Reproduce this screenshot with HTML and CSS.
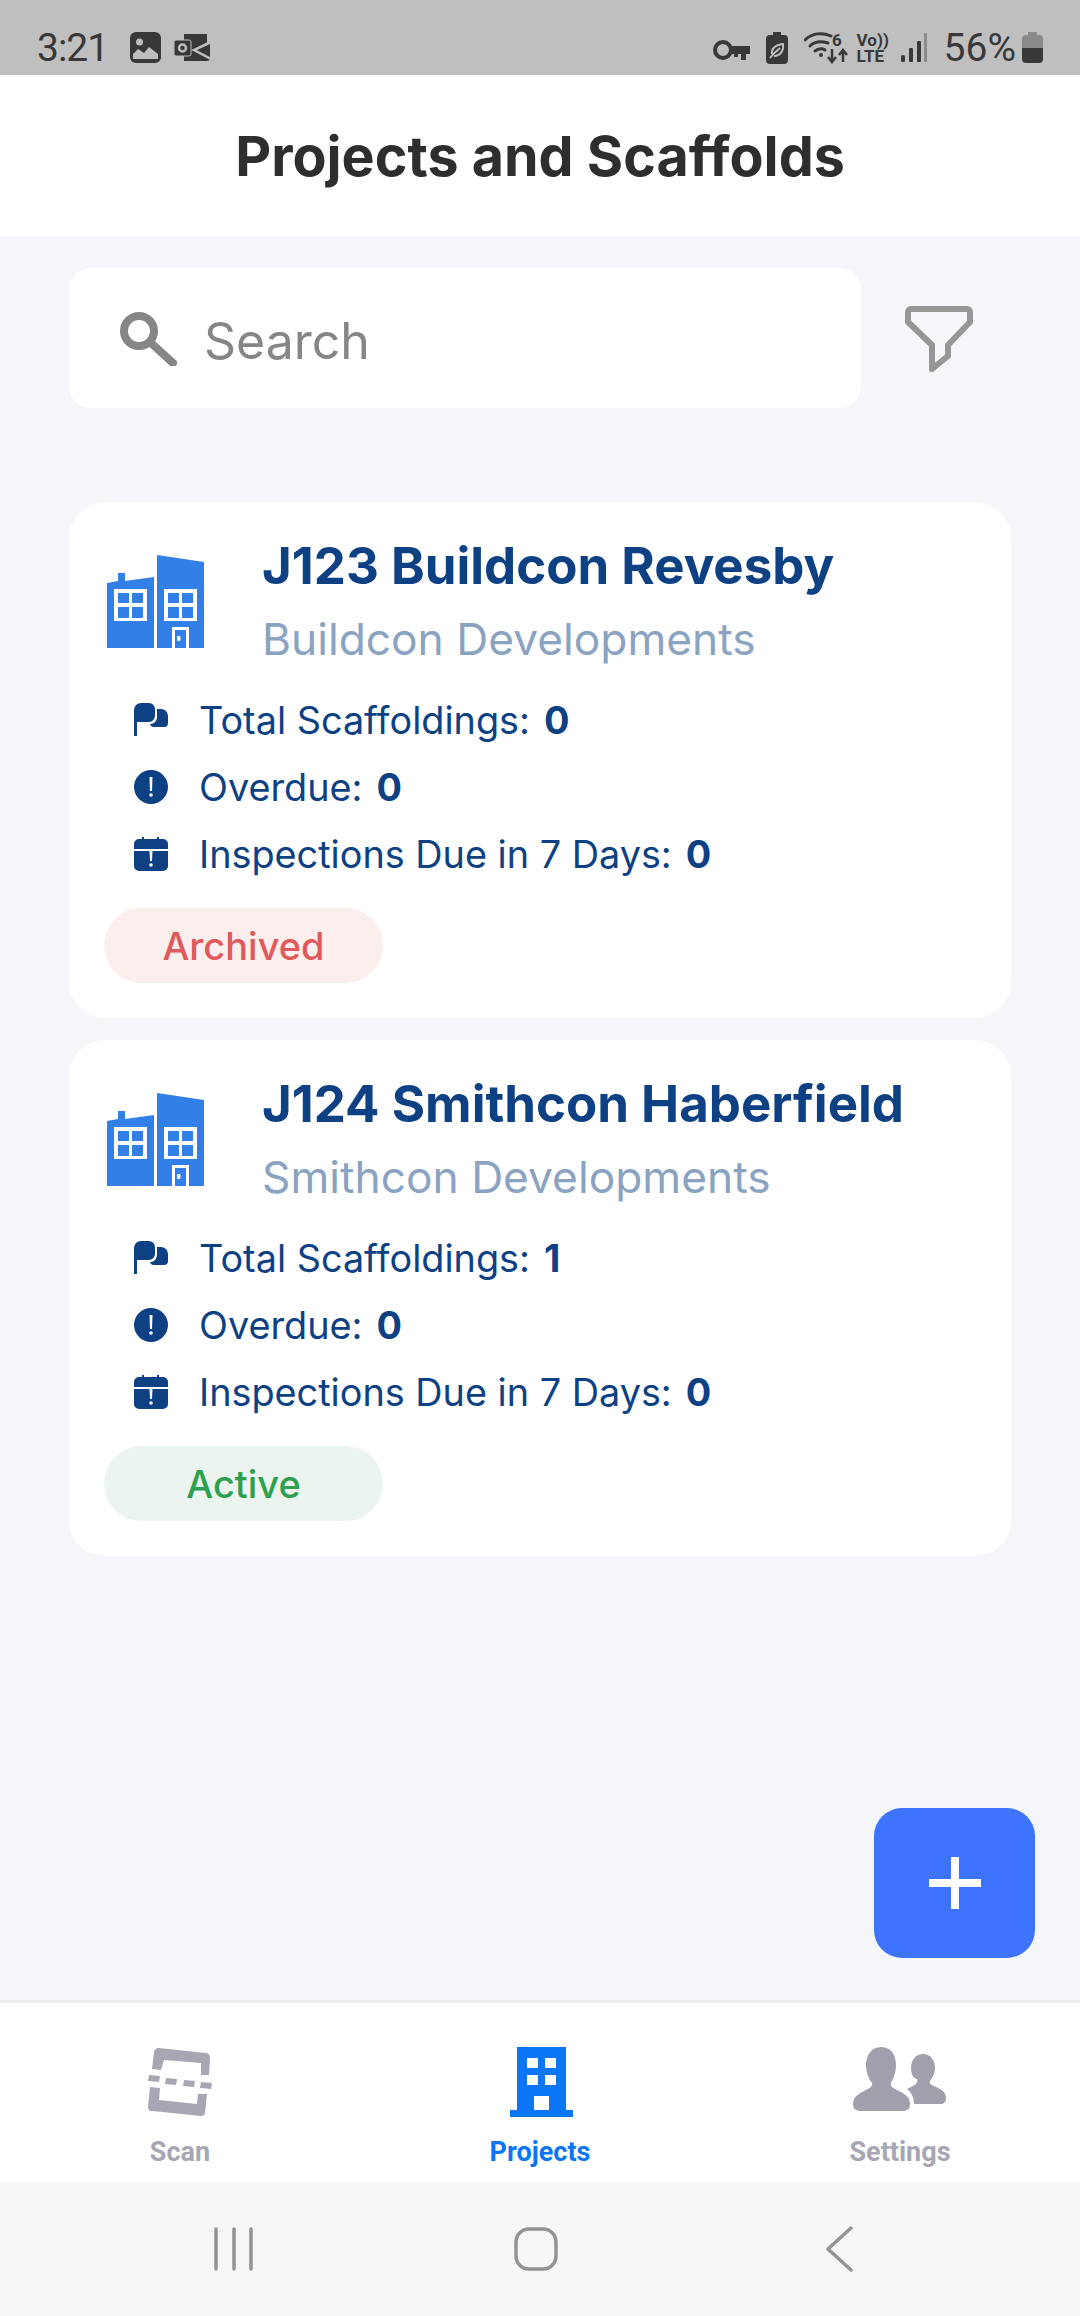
FILE: index.html
```html
<!DOCTYPE html>
<html lang="en">

<head>
    <meta charset="UTF-8">
    <meta name="viewport" content="width=device-width, initial-scale=1.0">
    <title>Projects and Scaffolds</title>
    <link rel="stylesheet" href="styles.css">
</head>

<body>
    <svg class="defs" width="0" height="0">
        <symbol id="building" viewBox="0 0 97 93">
            <path fill="#337fe8" fill-rule="evenodd" d="M0 28l11-2v-8h7v8l29-4v71H0zM7 34v32h33V34zM50 0l47 7v86H82V72H65v21H50zM57 34v32h33V34z" />
            <path fill="#337fe8" d="M11 38h11v10H11zM25 38h11v10H25zM11 52h11v11H11zM25 52h11v11H25zM61 38h11v10H61zM75 38h11v10H75zM61 52h11v11H61zM75 52h11v11H75zM68 75h11v18H68z" />
            <rect fill="#fff" x="70" y="81" width="3.500" height="5" rx="1" />
        </symbol>
        <symbol id="flag" viewBox="0 0 34 34">
            <path fill="#0d4184" d="M0 7a7 7 0 0 1 7-7h8a6 6 0 0 1 6 6v7a6 6 0 0 1-6 6H3v14H0z" />
            <path fill="#0d4184" d="M23 6h4a7 7 0 0 1 7 7v7a4 4 0 0 1-4 4H20a4 4 0 0 1-4-3h1a7 7 0 0 0 6-7z" />
        </symbol>
        <symbol id="alert" viewBox="0 0 34 34">
            <circle fill="#0d4184" cx="17" cy="17" r="17" />
            <path fill="#fff" d="M15.500 7h3l-.5 14h-2z" />
            <circle fill="#fff" cx="17" cy="25" r="1.800" />
        </symbol>
        <symbol id="due" viewBox="0 0 34 34">
            <path fill="#0d4184" d="M5 2h3V0h2v2h13V0h2v2h4a5 5 0 0 1 5 5v5H0V7a5 5 0 0 1 5-5zM0 14h15.500l.5 10h2l.5-10H34v15a5 5 0 0 1-5 5H5a5 5 0 0 1-5-5z" />
            <circle fill="#fff" cx="17" cy="28" r="1.800" />
        </symbol>
    </svg>

    <div class="status-bar">
        <div class="status-left">
            <span class="time">3:21</span>
            <svg width="31" height="31" viewBox="0 0 31 31">
                <rect fill="#383838" width="31" height="31" rx="6" />
                <circle fill="#bfbfbf" cx="9.500" cy="10" r="3.500" />
                <path fill="#bfbfbf" d="M3 27v-5l5-5 6 4 5-6 9 7v5z" />
            </svg>
            <svg width="37" height="28" viewBox="0 0 37 28">
                <path fill="#383838" d="M10 0h23v9l3 1v16l-3 1H10z" />
                <path fill="none" stroke="#bfbfbf" stroke-width="2.500" d="M37 8L20 16l17 9" />
                <rect fill="#383838" stroke="#bfbfbf" stroke-width="1" y="6" width="17" height="16" rx="2" />
                <circle fill="none" stroke="#bfbfbf" stroke-width="2.500" cx="8.500" cy="14" r="3.500" />
            </svg>
        </div>
        <div class="status-right">
            <svg class="key" width="37" height="20" viewBox="0 0 37 20">
                <circle fill="none" stroke="#383838" stroke-width="4" cx="10" cy="10" r="8" />
                <path fill="#383838" d="M17 6h20v8h-4v6h-5v-6h-3v3h-4v-3h-4z" />
            </svg>
            <svg class="gap-l" width="22" height="32" viewBox="0 0 22 32">
                <path fill="#383838" d="M7 0h8v3h3a4 4 0 0 1 4 4v21a4 4 0 0 1-4 4H4a4 4 0 0 1-4-4V7a4 4 0 0 1 4-4h3z" />
                <path fill="none" stroke="#bfbfbf" stroke-width="2" d="M4 26c3-4 5-6 10-10M6 22c-1-5 3-9 11-10 1 7-3 12-9 12" />
            </svg>
            <svg class="gap-l" width="45" height="33" viewBox="0 0 45 33">
                <g fill="none" stroke="#383838" stroke-width="3" stroke-linecap="round">
                    <path d="M1 9C8 2 18 1 27 5" />
                    <path d="M6 15c5-5 11-5 18-3" />
                    <path d="M11 20c3-2 7-3 10-1" />
                </g>
                <circle fill="#383838" cx="17" cy="24" r="2" />
                <text x="28" y="15" class="wifi-six">6</text>
                <path fill="none" stroke="#383838" stroke-width="2.500" d="M28 18v12M24 26l4 5 4-5M39 31V20M35 24l4-5 4 5" />
            </svg>
            <div class="volte"><span>Vo))</span><span>LTE</span></div>
            <svg class="gap-m" width="26" height="29" viewBox="0 0 26 29">
                <rect fill="#383838" y="22" width="4" height="7" rx="1.500" />
                <rect fill="#383838" x="8" y="15" width="4" height="14" rx="1" />
                <rect fill="#383838" x="16" y="8" width="4" height="21" rx="1" />
                <rect fill="#8a8a8a" x="23" width="3" height="29" rx="1" />
            </svg>
            <span class="battery-text">56%</span>
            <svg width="21" height="31" viewBox="0 0 21 31">
                <path fill="#8a8a8a" d="M6 0h9v3h2a4 4 0 0 1 4 4v9H0V7a4 4 0 0 1 4-4h2z" />
                <path fill="#383838" d="M0 16h21v11a4 4 0 0 1-4 4H4a4 4 0 0 1-4-4z" />
            </svg>
        </div>
    </div>

    <header class="page-header">
        <h1>Projects and Scaffolds</h1>
    </header>

    <main class="content">
        <div class="search-row">
            <div class="search-box">
                <svg width="58" height="56" viewBox="0 0 58 56">
                    <circle fill="none" stroke="#868686" stroke-width="8" cx="20" cy="21" r="15" />
                    <path fill="none" stroke="#868686" stroke-width="8" stroke-linecap="round" d="M32 33l22 20" />
                </svg>
                <span class="search-text">Search</span>
            </div>
            <svg class="filter-icon" width="68" height="66" viewBox="0 0 68 66">
                <path fill="none" stroke="#969696" stroke-width="6" stroke-linejoin="round" d="M6 3h56a3 3 0 0 1 3 3v10L43 39v11L27 63V39L3 16V6a3 3 0 0 1 3-3z" />
            </svg>
        </div>

        <section class="card">
            <div class="card-top">
                <svg class="building" width="97" height="93"><use href="#building" /></svg>
                <div>
                    <div class="card-title">J123 Buildcon Revesby</div>
                    <div class="card-sub">Buildcon Developments</div>
                </div>
            </div>
            <ul class="stats">
                <li><svg width="34" height="34"><use href="#flag" /></svg><span>Total Scaffoldings:</span><b>0</b></li>
                <li><svg width="34" height="34"><use href="#alert" /></svg><span>Overdue:</span><b>0</b></li>
                <li><svg width="34" height="34"><use href="#due" /></svg><span>Inspections Due in 7 Days:</span><b>0</b></li>
            </ul>
            <div class="badge archived">Archived</div>
        </section>

        <section class="card">
            <div class="card-top">
                <svg class="building" width="97" height="93"><use href="#building" /></svg>
                <div>
                    <div class="card-title">J124 Smithcon Haberfield</div>
                    <div class="card-sub">Smithcon Developments</div>
                </div>
            </div>
            <ul class="stats">
                <li><svg width="34" height="34"><use href="#flag" /></svg><span>Total Scaffoldings:</span><b>1</b></li>
                <li><svg width="34" height="34"><use href="#alert" /></svg><span>Overdue:</span><b>0</b></li>
                <li><svg width="34" height="34"><use href="#due" /></svg><span>Inspections Due in 7 Days:</span><b>0</b></li>
            </ul>
            <div class="badge active">Active</div>
        </section>

        <button class="fab" type="button">
            <svg width="52" height="52" viewBox="0 0 52 52">
                <path fill="#fff" d="M22 0h8v22h22v8H30v22h-8V30H0v-8h22z" />
            </svg>
        </button>
    </main>

    <nav class="tab-bar">
        <div class="tab">
            <svg width="64" height="70" viewBox="0 0 64 70">
                <path fill="#a6a7b2" d="M11 1l47 5a5 5 0 0 1 4 5l-1 17h-8V16L16 13l-3 10-9-1 2-17a5 5 0 0 1 5-4zM2 40l10 1-1 12 38 4 1-10 9 0-2 19a4 4 0 0 1-4 3L5 64a4 4 0 0 1-5-4z" />
                <path fill="#a6a7b2" d="M1 28l11 1-1 6-11-1zM18 31l11 1-1 6-11-1zM36 33l11 1-1 6-11-1zM53 35l11 1-1 6-11-1z" />
            </svg>
            <span>Scan</span>
        </div>
        <div class="tab current">
            <svg width="64" height="70" viewBox="0 0 64 70">
                <path fill="#0a76f6" fill-rule="evenodd" d="M7 0h49v63h7v7H0v-7h7zM17 11v10h11V11zM35 11v10h11V11zM17 28v10h11V28zM35 28v10h11V28zM24 49v14h15V49z" />
            </svg>
            <span>Projects</span>
        </div>
        <div class="tab">
            <svg width="94" height="70" viewBox="0 0 94 70">
                <path fill="#a0a1ad" d="M28 0C39 0 43 9 43 18 43 26 40 32 38 36 37 39 40 41 44 43 50 46 57 49 57 57 57 62 54 64 50 64H8C3 64 0 62 0 57 0 49 7 46 13 43 17 41 20 39 19 36 16 32 13 26 13 18 13 9 18 0 28 0Z" />
                <path fill="#a0a1ad" d="M70 7C78 7 82 14 82 21 82 27 79 31 77 34 76 36 78 38 81 39 87 42 93 44 93 51 93 55 91 57 87 57H61C61 50 58 45 54 42 57 40 61 39 63 37 64 35 65 33 64 32 60 31 58 27 58 21 58 14 62 7 70 7Z" />
            </svg>
            <span>Settings</span>
        </div>
    </nav>

    <div class="system-nav">
        <svg width="40" height="44" viewBox="0 0 40 44">
            <path fill="none" stroke="#949494" stroke-width="3.500" stroke-linecap="round" d="M2 2v40M20 2v40M37 2v40" />
        </svg>
        <svg class="nav-home" width="44" height="44" viewBox="0 0 44 44">
            <rect fill="none" stroke="#949494" stroke-width="3.500" x="2" y="2" width="40" height="40" rx="13" />
        </svg>
        <svg class="nav-back" width="28" height="46" viewBox="0 0 28 46">
            <path fill="none" stroke="#949494" stroke-width="3.500" stroke-linecap="round" stroke-linejoin="round" d="M25 2L2 23l23 21" />
        </svg>
    </div>
</body>

</html>
```

FILE: styles.css
```css
* {
    box-sizing: border-box;
}

html,
body {
    margin: 0;
    padding: 0;
}

body {
    width: 1080px;
    height: 2316px;
    display: flex;
    flex-direction: column;
    overflow: hidden;
    background-color: #f5f6fa;
    font-family: Inter, "Noto Sans", sans-serif;
}

.defs {
    position: absolute;
}

svg {
    display: block;
    flex-shrink: 0;
}

/* status bar */
.status-bar {
    height: 75px;
    padding: 20px 37px 0 37px;
    display: flex;
    justify-content: space-between;
    align-items: center;
    background-color: #bfbfbf;
    color: #383838;
    font-family: Roboto, sans-serif;
    font-size: 39px;
}

.status-left,
.status-right {
    display: flex;
    align-items: center;
}

.status-left .time {
    margin-right: 22px;
    font-size: 39px;
    letter-spacing: -1px;
}

.status-left svg {
    margin-right: 13px;
}

.status-right .key {
    margin-top: 5px;
}

.status-right .gap-l {
    margin-left: 16px;
}

.status-right .gap-m {
    margin-left: 14px;
}

.wifi-six {
    font-family: Roboto, sans-serif;
    font-size: 17px;
    font-weight: 700;
    fill: #383838;
}

.volte {
    margin-left: 8px;
    display: flex;
    flex-direction: column;
    font-size: 17px;
    font-weight: 700;
    line-height: 16px;
    width: 30px;
    white-space: nowrap;
}

.battery-text {
    margin: 0 6px 0 17px;
}

/* title */
.page-header {
    height: 161px;
    display: flex;
    align-items: center;
    justify-content: center;
    background-color: #fff;
}

.page-header h1 {
    margin: 0;
    font-size: 55.600px;
    font-weight: 700;
    color: #2e2e2e;
}

/* list */
.content {
    flex: 1;
    position: relative;
    padding: 32px 69px 0;
    border-bottom: 3px solid #eeeeef;
}

.search-row {
    display: flex;
    align-items: center;
    margin-bottom: 94px;
}

.search-box {
    width: 792px;
    height: 140px;
    padding: 0 50px;
    display: flex;
    align-items: center;
    gap: 27px;
    background-color: #fff;
    border-radius: 22px;
}

.search-text {
    margin-top: 5px;
    font-size: 50px;
    color: #868686;
}

.filter-icon {
    margin: 2px 0 0 44px;
}

.card {
    height: 516px;
    margin-bottom: 22px;
    padding: 35px 35px 0;
    background-color: #fff;
    border-radius: 36px;
}

.card-top {
    display: flex;
    align-items: flex-start;
}

.building {
    margin: 18px 58px 0 3px;
}

.card-title {
    font-size: 51px;
    line-height: 58px;
    font-weight: 700;
    color: #0d4184;
}

.card-sub {
    margin-top: 18px;
    font-size: 44.300px;
    line-height: 52px;
    color: #8aa3c1;
}

.stats {
    list-style: none;
    margin: 21px 0 0;
    padding: 0 0 0 30px;
}

.stats li {
    height: 67px;
    display: flex;
    align-items: center;
    font-size: 37.800px;
    color: #0d4184;
}

.stats li svg {
    margin-right: 31px;
}

.stats b {
    margin-left: 14px;
    font-weight: 700;
}

.badge {
    width: 279px;
    height: 75px;
    margin-top: 21px;
    display: flex;
    align-items: center;
    justify-content: center;
    border-radius: 38px;
    font-size: 38px;
    font-weight: 500;
}

.archived {
    background-color: #fbefee;
    color: #de5a5c;
}

.active {
    background-color: #ebf4ee;
    color: #2ca04f;
}

.fab {
    position: absolute;
    right: 45px;
    bottom: 42px;
    width: 161px;
    height: 150px;
    padding: 0;
    display: flex;
    align-items: center;
    justify-content: center;
    border: none;
    border-radius: 28px;
    background-color: #3e73fb;
}

/* bottom tabs */
.tab-bar {
    height: 179px;
    display: grid;
    grid-template-columns: repeat(3, 1fr);
    background-color: #fff;
}

.tab {
    padding-top: 44px;
    display: flex;
    flex-direction: column;
    align-items: center;
    gap: 19px;
    font-family: Roboto, sans-serif;
    font-size: 27px;
    font-weight: 700;
    color: #a6a7b2;
}

.tab.current {
    color: #0a76f6;
}

.tab.current svg {
    margin-left: 3px;
}

.system-nav {
    height: 134px;
    padding-left: 214px;
    display: flex;
    align-items: center;
    background-color: #f6f7f9;
}

.nav-home {
    margin-left: 260px;
}

.nav-back {
    margin-left: 268px;
}
```
